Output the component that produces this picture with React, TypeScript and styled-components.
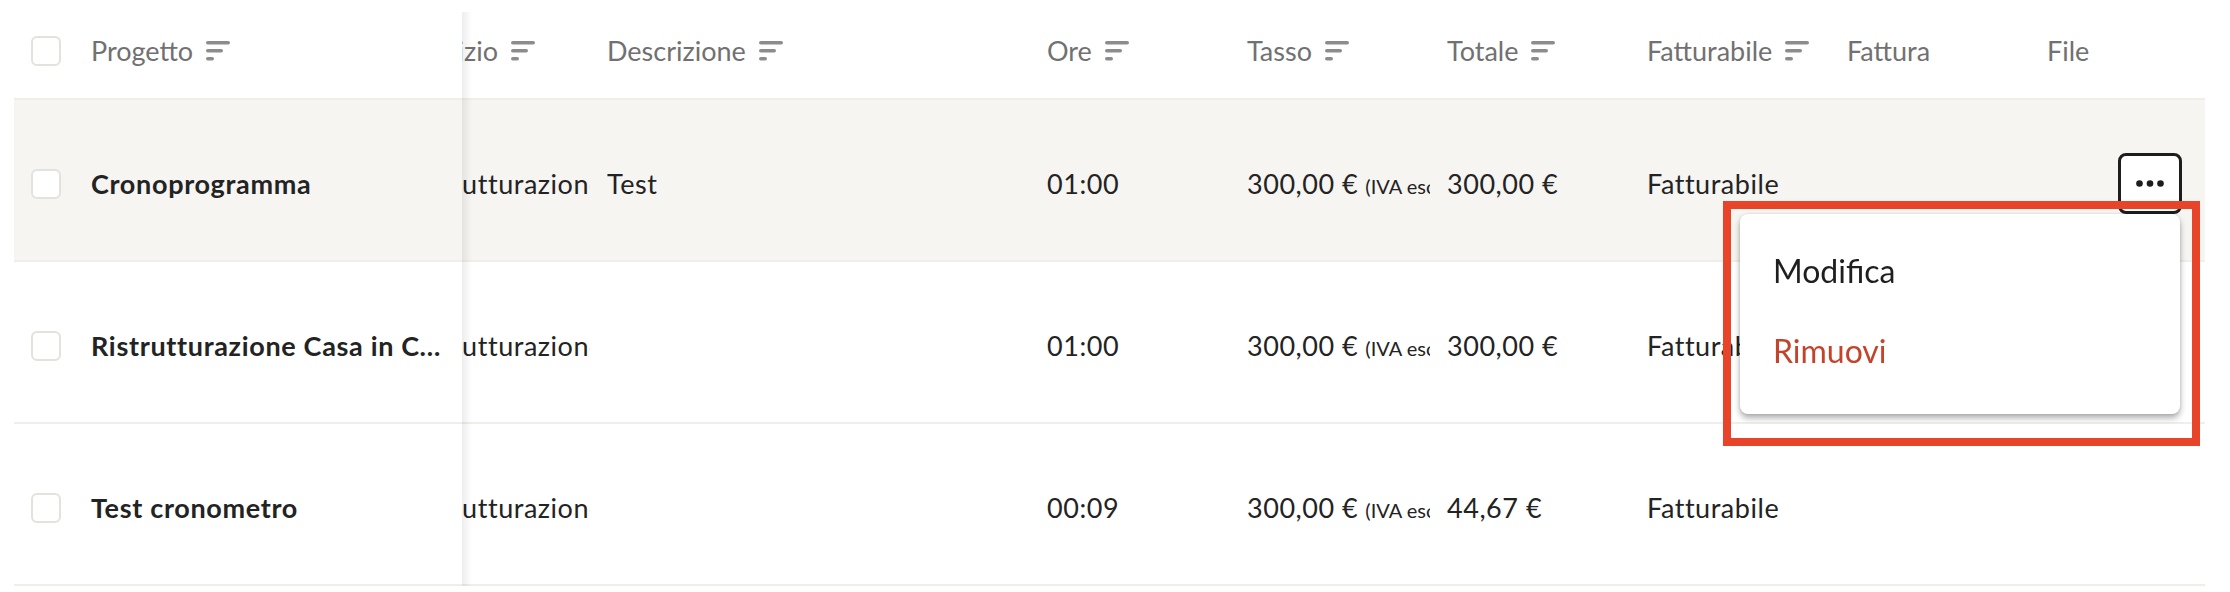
import { useLayoutEffect, useRef } from 'react'
import styled, { createGlobalStyle } from 'styled-components'

const GlobalStyle = createGlobalStyle`
  body {
    margin: 0;
    background: #ffffff;
    font-family: 'Lato', 'Liberation Sans', sans-serif;
  }
`

const Page = styled.div`
  box-sizing: border-box;
  width: 2205px;
  padding-left: 14px;
`

const TableScroll = styled.div`
  overflow-x: auto;
  scrollbar-width: none;

  &::-webkit-scrollbar {
    display: none;
  }
`

const Table = styled.div`
  display: flex;
  flex-direction: column;
  width: max-content;
`

const Row = styled.div<{ $header?: boolean; $active?: boolean }>`
  display: flex;
  height: ${({ $header }) => ($header ? 98 : 160)}px;
  border-bottom: 2px solid #efeee9;
  background: ${({ $active }) => ($active ? '#f6f5f2' : '#ffffff')};
  color: ${({ $header }) => ($header ? '#717171' : '#232323')};
  font-size: 27px;
`

const Cell = styled.div<{ $w: number; $header?: boolean; $pr?: number }>`
  flex: 0 0 ${({ $w }) => $w}px;
  box-sizing: border-box;
  display: flex;
  align-items: center;
  min-width: 0;
  padding: ${({ $header }) => ($header ? '3px' : '7px')} ${({ $pr = 15 }) => $pr}px 0 0;
`

const StickyCell = styled(Cell)`
  position: sticky;
  left: 0;
  z-index: 2;
  gap: 30px;
  padding-left: 17px;
  padding-right: 16px;
  background: inherit;

  &::after {
    content: '';
    position: absolute;
    left: 100%;
    top: ${({ $header }) => ($header ? '12px' : '0')};
    bottom: -2px;
    width: 10px;
    background: linear-gradient(to right, rgba(0, 0, 0, 0.07), rgba(0, 0, 0, 0));
  }
`

const ActionCell = styled(Cell)<{ $open?: boolean }>`
  position: sticky;
  right: 0;
  z-index: ${({ $open }) => ($open ? 5 : 3)};
  justify-content: flex-end;
  padding-right: 23px;
  background: inherit;
`

const Checkbox = styled.input.attrs({ type: 'checkbox' })`
  appearance: none;
  flex: 0 0 auto;
  width: 30px;
  height: 30px;
  margin: 0;
  border: 2px solid #e4e2dc;
  border-radius: 6px;
  background: #ffffff;
`

const Text = styled.span<{ $bold?: boolean; $ellipsis?: boolean }>`
  min-width: 0;
  overflow: hidden;
  white-space: nowrap;
  text-overflow: ${({ $ellipsis }) => ($ellipsis ? 'ellipsis' : 'clip')};
  font-weight: ${({ $bold }) => ($bold ? 700 : 400)};
  letter-spacing: ${({ $bold }) => ($bold ? '0.025em' : '0.02em')};
`

const Note = styled.span`
  margin-left: 7px;
  font-size: 20px;
  letter-spacing: 0;
`

const HeadLabel = styled.span`
  display: flex;
  align-items: center;
  gap: 13px;
  white-space: nowrap;
`

const MenuAnchor = styled.div`
  position: relative;
`

const DotsButton = styled.button`
  display: flex;
  align-items: center;
  justify-content: center;
  width: 64px;
  height: 61px;
  padding: 0;
  border: 3px solid #1d1d1d;
  border-radius: 8px;
  background: #ffffff;
  color: #1d1d1d;
  cursor: pointer;
`

const Menu = styled.div`
  position: absolute;
  top: 100%;
  right: 2px;
  width: 440px;
  padding: 16px 0 24px;
  border-radius: 8px;
  background: #ffffff;
  box-shadow: 0 4px 6px rgba(0, 0, 0, 0.32), 0 0 3px rgba(0, 0, 0, 0.12);
`

const MenuItem = styled.div<{ $danger?: boolean }>`
  display: flex;
  align-items: center;
  height: 80px;
  padding-left: 33px;
  font-size: 32px;
  color: ${({ $danger }) => ($danger ? '#c4442b' : '#1f1f1f')};
  cursor: pointer;
`

const Highlight = styled.div`
  position: absolute;
  top: -13px;
  left: -17px;
  right: -20px;
  bottom: -32px;
  border: 8px solid #e8442a;
  pointer-events: none;
`

const SortIcon = () => (
  <svg width="24" height="20" viewBox="0 0 24 20" fill="#8c8c8c">
    <rect x="0" y="0" width="24" height="3.6" rx="1.8" />
    <rect x="0" y="8" width="17" height="3.6" rx="1.8" />
    <rect x="0" y="16" width="8" height="3.6" rx="1.8" />
  </svg>
)

const DotsIcon = () => (
  <svg width="28" height="7" viewBox="0 0 28 7" fill="currentColor">
    <circle cx="3.5" cy="3.5" r="3.3" />
    <circle cx="14" cy="3.5" r="3.3" />
    <circle cx="24.5" cy="3.5" r="3.3" />
  </svg>
)

const columns = [
  { key: 'service', label: 'Servizio', width: 202, pr: 17, sort: true },
  { key: 'description', label: 'Descrizione', width: 440, pr: 15, sort: true },
  { key: 'hours', label: 'Ore', width: 200, pr: 15, sort: true },
  { key: 'rate', label: 'Tasso', width: 200, pr: 17, sort: true },
  { key: 'total', label: 'Totale', width: 200, pr: 15, sort: true },
  { key: 'billable', label: 'Fatturabile', width: 200, pr: 15, sort: true },
  { key: 'invoice', label: 'Fattura', width: 200, pr: 15, sort: false },
  { key: 'file', label: 'File', width: 200, pr: 15, sort: false },
]

type Entry = {
  project: string
  service: string
  description: string
  hours: string
  rate: string
  total: string
  billable: string
}

const entries: Entry[] = [
  {
    project: 'Cronoprogramma',
    service: 'Ristrutturazione',
    description: 'Test',
    hours: '01:00',
    rate: '300,00 €',
    total: '300,00 €',
    billable: 'Fatturabile',
  },
  {
    project: 'Ristrutturazione Casa in Centro',
    service: 'Ristrutturazione',
    description: '',
    hours: '01:00',
    rate: '300,00 €',
    total: '300,00 €',
    billable: 'Fatturabile',
  },
  {
    project: 'Test cronometro',
    service: 'Ristrutturazione',
    description: '',
    hours: '00:09',
    rate: '300,00 €',
    total: '44,67 €',
    billable: 'Fatturabile',
  },
]

function renderValue(key: string, entry: Entry) {
  switch (key) {
    case 'rate':
      return (
        <Text>
          {entry.rate}
          <Note>(IVA esclusa)</Note>
        </Text>
      )
    case 'invoice':
    case 'file':
      return null
    default:
      return <Text>{entry[key as keyof Entry]}</Text>
  }
}

export default function App() {
  const scrollRef = useRef<HTMLDivElement>(null)
  const openRow = 0

  useLayoutEffect(() => {
    if (scrollRef.current) scrollRef.current.scrollLeft = 57
  }, [])

  return (
    <>
      <GlobalStyle />
      <Page>
        <TableScroll ref={scrollRef}>
          <Table>
            <Row $header>
              <StickyCell $w={448} $header>
                <Checkbox />
                <HeadLabel>
                  Progetto
                  <SortIcon />
                </HeadLabel>
              </StickyCell>
              {columns.map((col) => (
                <Cell key={col.key} $w={col.width} $pr={col.pr} $header>
                  <HeadLabel>
                    {col.label}
                    {col.sort && <SortIcon />}
                  </HeadLabel>
                </Cell>
              ))}
              <ActionCell $w={100} $header />
            </Row>

            {entries.map((entry, i) => (
              <Row key={entry.project} $active={i === openRow}>
                <StickyCell $w={448}>
                  <Checkbox />
                  <Text $bold $ellipsis>
                    {entry.project}
                  </Text>
                </StickyCell>
                {columns.map((col) => (
                  <Cell key={col.key} $w={col.width} $pr={col.pr}>
                    {renderValue(col.key, entry)}
                  </Cell>
                ))}
                <ActionCell $w={100} $open={i === openRow}>
                  {i === openRow && (
                    <MenuAnchor>
                      <DotsButton aria-label="Azioni">
                        <DotsIcon />
                      </DotsButton>
                      <Menu>
                        <MenuItem>Modifica</MenuItem>
                        <MenuItem $danger>Rimuovi</MenuItem>
                        <Highlight />
                      </Menu>
                    </MenuAnchor>
                  )}
                </ActionCell>
              </Row>
            ))}
          </Table>
        </TableScroll>
      </Page>
    </>
  )
}
